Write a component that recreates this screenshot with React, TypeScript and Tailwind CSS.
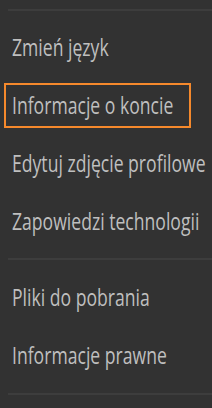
const groups: string[][] = [
  ["Zmień język", "Informacje o koncie", "Edytuj zdjęcie profilowe", "Zapowiedzi technologii"],
  ["Pliki do pobrania", "Informacje prawne"],
];

const SELECTED = "Informacje o koncie";

function Divider() {
  return <div className="ml-2 h-[2px] bg-[#3d3d3d]" />;
}

function MenuItem({ label }: { label: string }) {
  const active = label === SELECTED;
  return (
    <div className="h-[58px] flex items-center">
      <div
        className={`ml-1 w-[187px] h-[45px] flex items-center pl-[6px] border-2 ${
          active ? "border-[#f5892c]" : "border-transparent"
        }`}
      >
        {/* the source face is a condensed sans, so squeeze a regular one */}
        <span className="inline-block origin-left scale-x-[0.765] text-[23px] leading-none text-[#bfbfbf] whitespace-nowrap [font-family:'Open_Sans',sans-serif]">
          {label}
        </span>
      </div>
    </div>
  );
}

export default function App() {
  return (
    <div className="w-[212px] h-[408px] bg-[#323232] overflow-hidden pt-[9px]">
      <Divider />
      <div className="pt-[7px] pb-[8px]">
        {groups[0].map((l) => (
          <MenuItem key={l} label={l} />
        ))}
      </div>
      <Divider />
      <div className="pt-[8px] pb-[9px]">
        {groups[1].map((l) => (
          <MenuItem key={l} label={l} />
        ))}
      </div>
      <Divider />
    </div>
  );
}
